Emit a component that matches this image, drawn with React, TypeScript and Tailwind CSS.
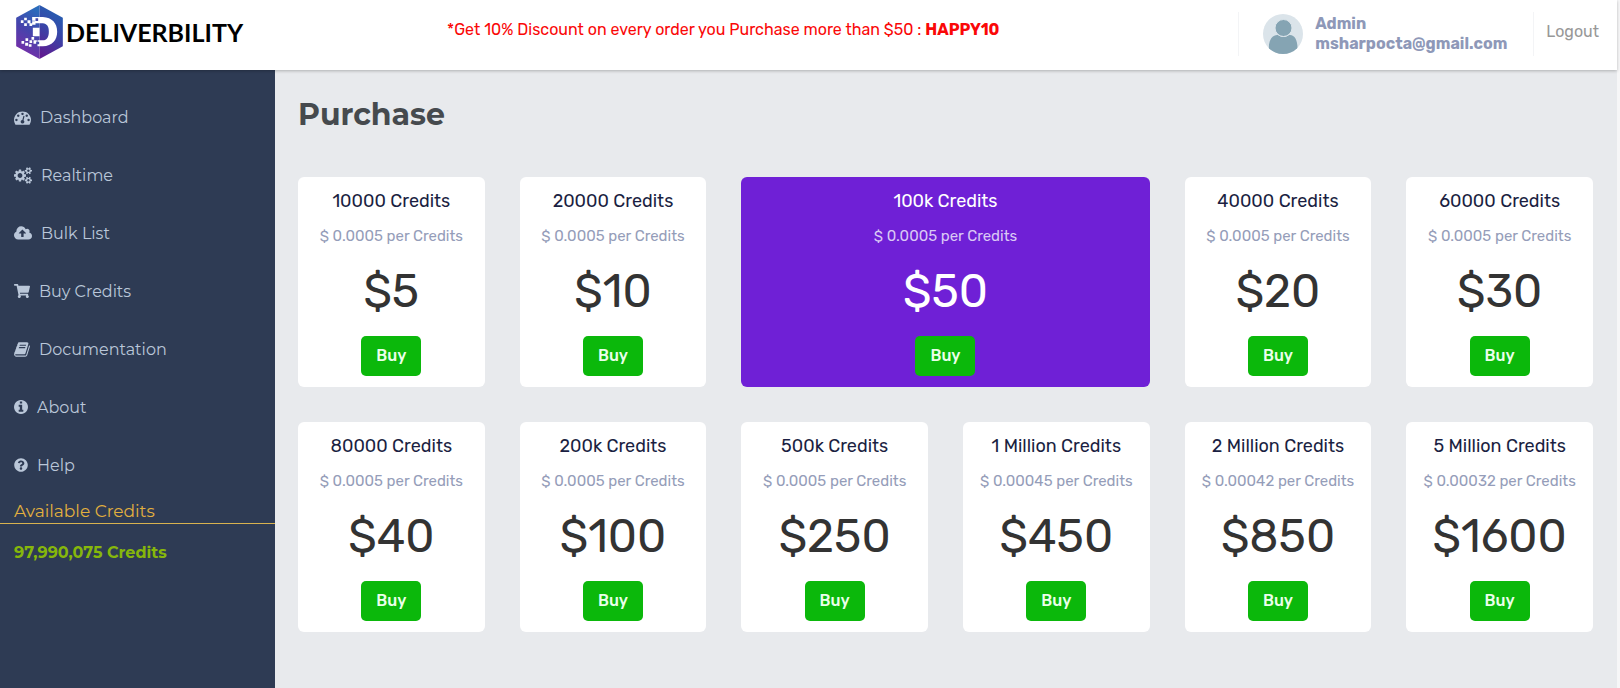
import React from 'react'
import { FaQuestionCircle, FaShoppingCart } from 'react-icons/fa'
import { twMerge } from 'tailwind-merge'

type Plan = {
  title: string
  rate: string
  price: string
  featured?: boolean
}

const plans: Plan[] = [
  { title: '10000 Credits', rate: '0.0005', price: '$5' },
  { title: '20000 Credits', rate: '0.0005', price: '$10' },
  { title: '100k Credits', rate: '0.0005', price: '$50', featured: true },
  { title: '40000 Credits', rate: '0.0005', price: '$20' },
  { title: '60000 Credits', rate: '0.0005', price: '$30' },
  { title: '80000 Credits', rate: '0.0005', price: '$40' },
  { title: '200k Credits', rate: '0.0005', price: '$100' },
  { title: '500k Credits', rate: '0.0005', price: '$250' },
  { title: '1 Million Credits', rate: '0.00045', price: '$450' },
  { title: '2 Million Credits', rate: '0.00042', price: '$850' },
  { title: '5 Million Credits', rate: '0.00032', price: '$1600' },
]

const navItems = [
  { label: 'Dashboard', icon: <GaugeIcon /> },
  { label: 'Realtime', icon: <CogsIcon /> },
  { label: 'Bulk List', icon: <CloudUploadIcon /> },
  { label: 'Buy Credits', icon: <FaShoppingCart className="size-4" /> },
  { label: 'Documentation', icon: <BookIcon /> },
  { label: 'About', icon: <InfoIcon /> },
  { label: 'Help', icon: <FaQuestionCircle className="size-[14px]" /> },
]

export default function App() {
  return (
    <div className="flex min-h-screen flex-col border-r-3 border-[#f6f6f7] bg-[#e8eaed] font-['Rubik','Inter',sans-serif]">
      <Header />
      <div className="flex flex-1">
        <Sidebar />
        <main className="flex-1 pt-[25px] pr-6 pb-10 pl-[23px]">
          <h1 className="font-['Montserrat','Inter',sans-serif] text-[30px] leading-10 font-bold text-[#464a4e]">
            Purchase
          </h1>
          <div className="mt-[42px] grid grid-cols-6 gap-[35px]">
            {plans.map((plan) => (
              <PlanCard key={plan.title} plan={plan} />
            ))}
          </div>
        </main>
      </div>
    </div>
  )
}

function Header() {
  return (
    <header className="relative flex h-[70px] items-center bg-white pr-[18px] pl-4 shadow-[0_1px_3px_rgba(0,0,0,0.25)]">
      <a href="#" className="mb-[6px] flex items-center gap-[3px]">
        <LogoMark />
        <span className="font-['Lato',sans-serif] text-[25px] leading-8 font-bold text-black">
          DELIVERBILITY
        </span>
      </a>
      <p className="mb-[10px] flex-1 pl-[204px] text-base leading-6 text-[#fa0808]">
        *Get 10% Discount on every order you Purchase more than $50 :{' '}
        <strong className="font-bold">HAPPY10</strong>
      </p>
      <div className="mb-[2px] flex h-11 items-center">
        <div className="flex h-full items-center gap-3 border-x border-[#f3f4f6] pr-[26px] pl-6">
          <Avatar />
          <div className="text-base leading-5 font-bold text-[#8e98b8]">
            <div>Admin</div>
            <div>msharpocta@gmail.com</div>
          </div>
        </div>
        <a href="#" className="mb-1 pl-3 text-base text-[#989898]">
          Logout
        </a>
      </div>
    </header>
  )
}

function Sidebar() {
  return (
    <aside className="w-[275px] shrink-0 bg-[#2e3b54] pt-[19px] font-['Montserrat','Inter',sans-serif] text-base text-[#bac7d9]">
      <nav>
        {navItems.map((item) => (
          <a
            key={item.label}
            href="#"
            className="flex h-[58px] items-center gap-[9px] pl-[14px] [&>svg]:mb-[2px]"
          >
            {item.icon}
            {item.label}
          </a>
        ))}
      </nav>
      <div className="border-b border-[#d8b24f] pt-1 pl-[14px] text-[17px] leading-6 text-[#e2b03e]">
        Available Credits
      </div>
      <div className="pt-[17px] pl-[14px] leading-6 font-bold text-[#86b70b]">
        97,990,075 Credits
      </div>
    </aside>
  )
}

function PlanCard({ plan }: { plan: Plan }) {
  const { featured } = plan

  return (
    <section
      className={twMerge(
        'flex h-[210px] flex-col items-center rounded-md bg-white pt-3 text-[#1b1f42]',
        featured && 'col-span-2 bg-[#6f20d6] text-white'
      )}
    >
      <h2 className="text-lg leading-6">{plan.title}</h2>
      <p
        className={twMerge(
          'mt-[11px] text-[15px] leading-6 text-[#959db9]',
          featured && 'text-[#dac8f5]'
        )}
      >
        $ {plan.rate} per Credits
      </p>
      <p
        className={twMerge(
          'mt-[17px] text-[46px] leading-[54px] text-[#333333]',
          featured && 'text-white'
        )}
      >
        {plan.price}
      </p>
      <button
        type="button"
        className="mt-[17px] h-10 w-15 rounded-[5px] bg-[#0bb80b] text-base font-medium text-[#eaffea]"
      >
        Buy
      </button>
    </section>
  )
}

function Avatar() {
  return (
    <svg viewBox="0 0 40 40" className="size-10" aria-hidden="true">
      <clipPath id="avatar-clip">
        <circle cx="20" cy="20" r="20" />
      </clipPath>
      <g clipPath="url(#avatar-clip)">
        <rect width="40" height="40" fill="#dbe4ea" />
        <path
          d="M6 36c-1-9 3-15 8-15 2 0 3 2 6.5 2s4.5-2 6.5-2c5 0 8 6 7.5 15L30 42H12z"
          fill="#85a4b3"
        />
        <circle cx="20.5" cy="14" r="8.5" fill="#85a4b3" stroke="#dbe4ea" />
      </g>
    </svg>
  )
}

function LogoMark() {
  return (
    <svg viewBox="0 0 140 162" className="h-[54px] w-[47px]" aria-hidden="true">
      <defs>
        <linearGradient id="logo-left" x1="0.6" y1="0" x2="0.3" y2="1">
          <stop offset="0" stopColor="#2a6cbc" />
          <stop offset="0.45" stopColor="#4544ac" />
          <stop offset="1" stopColor="#7f2aa8" />
        </linearGradient>
        <linearGradient id="logo-right" x1="0.6" y1="0" x2="0.3" y2="1">
          <stop offset="0" stopColor="#2361b2" />
          <stop offset="0.45" stopColor="#3846a8" />
          <stop offset="1" stopColor="#5f1a90" />
        </linearGradient>
      </defs>
      <path d="M70 0 0 38v86l70 38z" fill="url(#logo-left)" />
      <path d="M70 0l70 38v86l-70 38z" fill="url(#logo-right)" />
      <path
        d="M48 36h32c28 2 43 18 43 44s-15 42-43 44H64v-18h16c12-1 18-10 18-26s-6-24-18-25H56v-8h-8z"
        fill="#fff"
      />
      <path
        d="M50 68h20v26H50z M14 46h8v8h-8z M24 38h8v8h-8z M34 46h9v9h-9z M24 55h8v8h-8z M40 55h8v8h-8z M48 49h10v10H48z M16 108h8v8h-8z M28 100h8v8h-8z M27 113h9v9h-9z M40 106h8v8h-8z M38 118h8v7h-8z M46 96h8v8h-8z M52 106h10v10H52z"
        fill="#fff"
      />
      <path d="M58 40h8v8h-8z M60 110h9v8h-9z" fill="#4648ac" />
    </svg>
  )
}

function GaugeIcon() {
  return (
    <svg
      viewBox="0 0 1792 1792"
      fill="currentColor"
      className="size-[17px]"
      aria-hidden="true"
    >
      <path d="M384 1152q0-53-37.5-90.5t-90.5-37.5-90.5 37.5-37.5 90.5 37.5 90.5 90.5 37.5 90.5-37.5 37.5-90.5zm192-448q0-53-37.5-90.5t-90.5-37.5-90.5 37.5-37.5 90.5 37.5 90.5 90.5 37.5 90.5-37.5 37.5-90.5zm428 481l101-382q6-26-7.5-48.5t-38.5-29.5-48 6.5-30 39.5l-101 382q-60 5-107 43.5t-63 98.5q-20 77 20 146t117 89 146-20 89-117q16-60-6-117t-72-91zm660-33q0-53-37.5-90.5t-90.5-37.5-90.5 37.5-37.5 90.5 37.5 90.5 90.5 37.5 90.5-37.5 37.5-90.5zm-640-640q0-53-37.5-90.5t-90.5-37.5-90.5 37.5-37.5 90.5 37.5 90.5 90.5 37.5 90.5-37.5 37.5-90.5zm448 192q0-53-37.5-90.5t-90.5-37.5-90.5 37.5-37.5 90.5 37.5 90.5 90.5 37.5 90.5-37.5 37.5-90.5zm320 448q0 261-141 483-19 29-54 29h-1402q-35 0-54-29-141-221-141-483 0-182 71-348t191-286 286-191 348-71 348 71 286 191 191 286 71 348z" />
    </svg>
  )
}

function CogsIcon() {
  return (
    <svg
      viewBox="0 0 1920 1792"
      fill="currentColor"
      className="h-[17px] w-[18px]"
      aria-hidden="true"
    >
      <path d="M896 896q0-106-75-181t-181-75-181 75-75 181 75 181 181 75 181-75 75-181zm768 512q0-52-38-90t-90-38-90 38-38 90q0 53 37.5 90.5t90.5 37.5 90.5-37.5 37.5-90.5zm0-1024q0-52-38-90t-90-38-90 38-38 90q0 53 37.5 90.5t90.5 37.5 90.5-37.5 37.5-90.5zm-384 421v185q0 10-7 19.5t-16 10.5l-155 24q-11 35-32 76 34 48 90 115 7 11 7 20 0 12-7 19-23 30-82.5 89.5t-78.5 59.5q-11 0-21-7l-115-90q-37 19-77 31-11 108-23 155-7 24-30 24h-186q-11 0-20-7.5t-10-17.5l-23-153q-34-10-75-31l-118 89q-7 7-20 7-11 0-21-8-144-133-144-160 0-9 7-19 10-14 41-53t47-61q-23-44-35-82l-152-24q-10-1-17-9.5t-7-19.5v-185q0-10 7-19.5t16-10.5l155-24q11-35 32-76-34-48-90-115-7-11-7-20 0-12 7-20 22-30 82-89t79-59q11 0 21 7l115 90q34-18 77-32 11-108 23-154 7-24 30-24h186q11 0 20 7.5t10 17.5l23 153q34 10 75 31l118-89q8-7 20-7 11 0 21 8 144 133 144 160 0 8-7 19-12 16-42 54t-45 60q23 48 34 82l152 23q10 2 17 10.5t7 19.5zm640 533v140q0 16-149 31-12 27-30 52 51 113 51 138 0 4-4 7-122 71-124 71-8 0-46-47t-52-68q-20 2-30 2t-30-2q-14 21-52 68t-46 47q-2 0-124-71-4-3-4-7 0-25 51-138-18-25-30-52-149-15-149-31v-140q0-16 149-31 13-29 30-52-51-113-51-138 0-4 4-7 4-2 35-20t59-34 30-16q8 0 46 46.5t52 67.5q20-2 30-2t30 2q51-71 92-112l6-2q4 0 124 70 4 3 4 7 0 25-51 138 17 23 30 52 149 15 149 31zm0-1024v140q0 16-149 31-12 27-30 52 51 113 51 138 0 4-4 7-122 71-124 71-8 0-46-47t-52-68q-20 2-30 2t-30-2q-14 21-52 68t-46 47q-2 0-124-71-4-3-4-7 0-25 51-138-18-25-30-52-149-15-149-31v-140q0-16 149-31 13-29 30-52-51-113-51-138 0-4 4-7 4-2 35-20t59-34 30-16q8 0 46 46.5t52 67.5q20-2 30-2t30 2q51-71 92-112l6-2q4 0 124 70 4 3 4 7 0 25-51 138 17 23 30 52 149 15 149 31z" />
    </svg>
  )
}

function CloudUploadIcon() {
  return (
    <svg
      viewBox="0 0 1920 1792"
      fill="currentColor"
      className="h-[17px] w-[18px]"
      aria-hidden="true"
    >
      <path d="M1280 864q0-14-9-23l-352-352q-9-9-23-9t-23 9l-351 351q-10 12-10 24 0 14 9 23t23 9h224v352q0 13 9.5 22.5t22.5 9.5h192q13 0 22.5-9.5t9.5-22.5v-352h224q13 0 22.5-9.5t9.5-22.5zm640 288q0 159-112.5 271.5t-271.5 112.5h-1088q-185 0-316.5-131.5t-131.5-316.5q0-130 70-240t188-165q-2-30-2-43 0-212 150-362t362-150q156 0 285.5 87t188.5 231q71-62 166-62 106 0 181 75t75 181q0 76-41 138 130 31 213.5 135.5t83.5 238.5z" />
    </svg>
  )
}

function BookIcon() {
  return (
    <svg
      viewBox="60 0 1672 1792"
      fill="currentColor"
      className="h-[17px] w-4"
      aria-hidden="true"
    >
      <path d="M1703 478q40 57 18 129l-275 906q-19 64-76.5 107.5t-122.5 43.5h-923q-77 0-148.5-53.5t-99.5-131.5q-24-67-2-127 0-4 3-27t4-37q1-8-3-21.5t-3-19.5q2-11 8-21t16.5-23.5 16.5-23.5q23-38 45-91.5t30-91.5q3-10 .5-30t-.5-28q3-11 17-28t17-23q21-36 42-92t25-90q1-9-2.5-32t.5-28q4-13 22-30.5t22-22.5q19-26 42.5-84.5t27.5-96.5q1-8-3-25.5t-2-26.5q2-8 9-18t18-23 17-21q8-12 16.5-30.5t15-35 16-36 19.5-32 26.5-23.5 36-11.5 47.5 5.5l-1 3q38-9 51-9h761q74 0 114 56t18 130l-274 906q-36 119-71.5 153.5t-128.5 34.5h-869q-27 0-38 15-11 16-1 43 24 70 144 70h923q29 0 56-15.5t35-41.5l300-987q7-22 5-57 38 15 59 43zm-1064 2q-4 13 2 22.5t20 9.5h608q13 0 25.5-9.5t16.5-22.5l21-64q4-13-2-22.5t-20-9.5h-608q-13 0-25.5 9.5t-16.5 22.5zm-83 256q-4 13 2 22.5t20 9.5h608q13 0 25.5-9.5t16.5-22.5l21-64q4-13-2-22.5t-20-9.5h-608q-13 0-25.5 9.5t-16.5 22.5z" />
    </svg>
  )
}

function InfoIcon() {
  return (
    <svg
      viewBox="128 128 1536 1536"
      fill="currentColor"
      className="size-[14px]"
      aria-hidden="true"
    >
      <path d="M1152 1376v-160q0-14-9-23t-23-9h-96v-512q0-14-9-23t-23-9h-320q-14 0-23 9t-9 23v160q0 14 9 23t23 9h96v320h-96q-14 0-23 9t-9 23v160q0 14 9 23t23 9h448q14 0 23-9t9-23zm-128-896v-160q0-14-9-23t-23-9h-192q-14 0-23 9t-9 23v160q0 14 9 23t23 9h192q14 0 23-9t9-23zm640 416q0 209-103 385.5t-279.5 279.5-385.5 103-385.5-103-279.5-279.5-103-385.5 103-385.5 279.5-279.5 385.5-103 385.5 103 279.5 279.5 103 385.5z" />
    </svg>
  )
}
